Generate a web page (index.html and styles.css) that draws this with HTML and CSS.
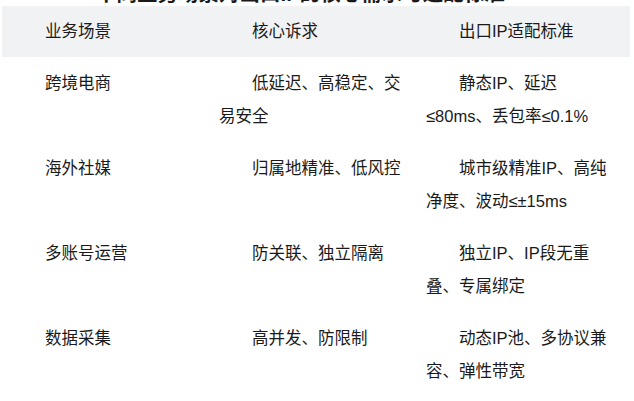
FILE: index.html
```html
<!DOCTYPE html>
<html lang="zh-CN">
<head>
<meta charset="utf-8">
<title>业务场景与出口IP适配</title>
<link rel="stylesheet" href="styles.css">
</head>
<body>
<div class="page">
  <h3 class="cut-title">不同业务场景对出口IP的核心需求与适配标准</h3>
  <table class="ip-table">
    <colgroup>
      <col class="c1"><col class="c2"><col class="c3">
    </colgroup>
    <thead>
      <tr>
        <th><p>业务场景</p></th>
        <th><p>核心诉求</p></th>
        <th><p>出口IP适配标准</p></th>
      </tr>
    </thead>
    <tbody>
      <tr>
        <td><p>跨境电商</p></td>
        <td><p>低延迟、高稳定、交易安全</p></td>
        <td><p>静态IP、延迟≤80ms、丢包率≤0.1%</p></td>
      </tr>
      <tr>
        <td><p>海外社媒</p></td>
        <td><p>归属地精准、低风控</p></td>
        <td><p>城市级精准IP、高纯净度、波动≤±15ms</p></td>
      </tr>
      <tr>
        <td><p>多账号运营</p></td>
        <td><p>防关联、独立隔离</p></td>
        <td><p>独立IP、IP段无重叠、专属绑定</p></td>
      </tr>
      <tr>
        <td><p>数据采集</p></td>
        <td><p>高并发、防限制</p></td>
        <td><p>动态IP池、多协议兼容、弹性带宽</p></td>
      </tr>
    </tbody>
  </table>
</div>
</body>
</html>
```

FILE: styles.css
```css
html, body {
  margin: 0;
  padding: 0;
  background: #ffffff;
}

.page {
  padding: 0 2px;
  font-family: "Liberation Sans", "Noto Sans CJK SC", sans-serif;
  font-size: 16.5px;
  color: #1a1a1a;
  overflow: hidden;
}

.cut-title {
  margin: -19px 0 0 0;
  padding-left: 94px;
  height: 25px;
  font-size: 20.5px;
  line-height: 25px;
  font-weight: 700;
  color: #1a1a1a;
  white-space: nowrap;
  overflow: hidden;
}

.ip-table {
  border-collapse: collapse;
  table-layout: fixed;
  width: 628px;
}

.c1 { width: 207px; }
.c2 { width: 207px; }
.c3 { width: 214px; }

.ip-table th,
.ip-table td {
  padding: 9.5px 10px;
  vertical-align: top;
  text-align: left;
  font-weight: 400;
}

.ip-table thead th {
  background: #f1f2f4;
  padding: 9px 10px;
}

.ip-table p {
  margin: 0;
  line-height: 33px;
  text-indent: 2em;
}
```
